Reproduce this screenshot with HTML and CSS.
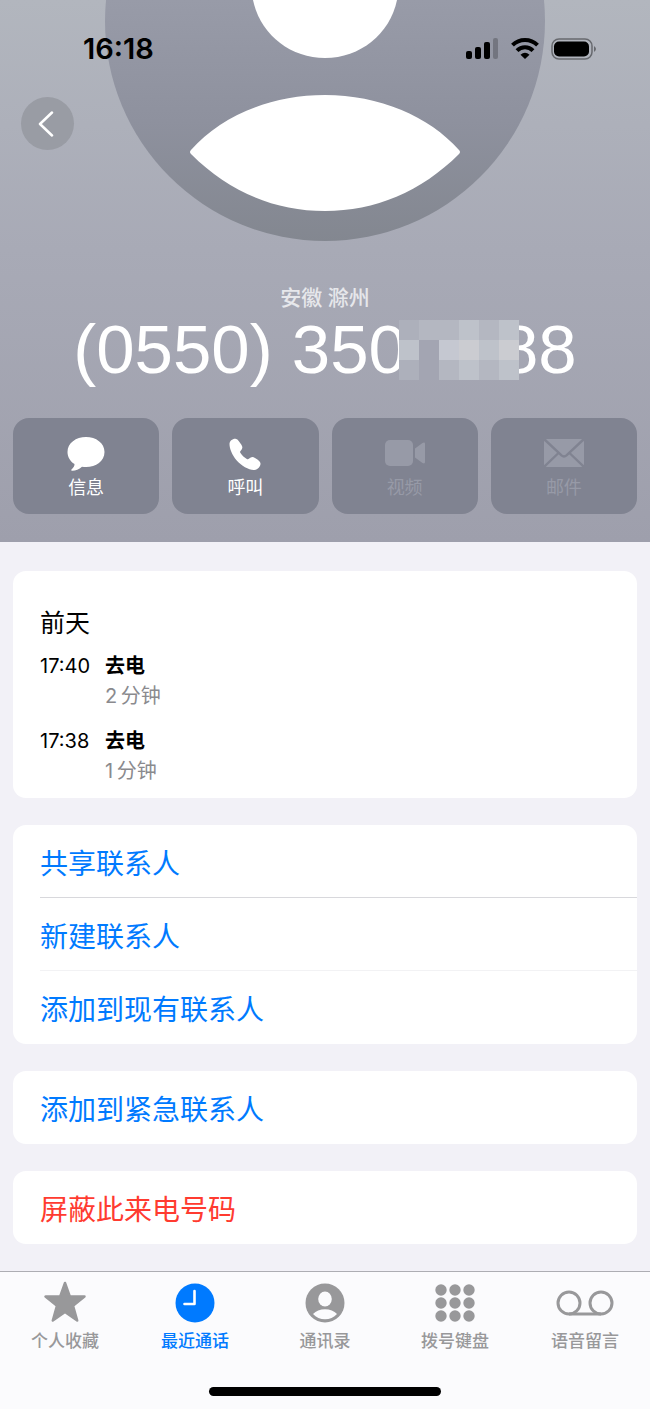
FILE: index.html
```html
<!DOCTYPE html>
<html lang="zh-CN">
<head>
  <meta charset="UTF-8">
  <meta name="viewport" content="width=device-width, initial-scale=1.0">
  <title>通话详情</title>
  <link rel="stylesheet" href="styles.css">
</head>
<body>
  <header class="hero">
    <svg class="avatar" viewBox="0 0 440 242" width="440" height="242" aria-hidden="true">
      <defs>
        <linearGradient id="avatar-fill" x1="0" y1="0" x2="0" y2="242" gradientUnits="userSpaceOnUse">
          <stop offset="0" stop-color="#989ba8"/>
          <stop offset="0.5" stop-color="#8e919e"/>
          <stop offset="1" stop-color="#838790"/>
        </linearGradient>
      </defs>
      <circle cx="220" cy="21" r="220" fill="url(#avatar-fill)"/>
      <path d="M148 0C155 34 185 58 220 58S285 34 292 0Z" fill="#fff"/>
      <path d="M86 150C116 116 166 95 220 95S324 116 354 150Q356 152 354 154C316 192 270 211 220 211S124 192 86 154Q84 152 86 150Z" fill="#fff"/>
    </svg>

    <div class="status-bar">
      <span class="clock">16:18</span>
      <div class="status-icons">
        <svg width="33" height="22" viewBox="0 0 33 22" aria-hidden="true">
          <rect x="0" y="13" width="6" height="8" rx="2"/>
          <rect x="9" y="9" width="6" height="12" rx="2"/>
          <rect x="18" y="4" width="6" height="17" rx="2"/>
          <rect x="27" y="0" width="5" height="21" rx="2" opacity="0.22"/>
        </svg>
        <svg width="28" height="22" viewBox="0 0 28 22" aria-hidden="true">
          <path d="M1.500 7.200A17.800 17.800 0 0 1 26.500 7.200" fill="none" stroke="#000" stroke-width="4"/>
          <path d="M6 12.600A11.200 11.200 0 0 1 22 12.600" fill="none" stroke="#000" stroke-width="4"/>
          <path d="M14 21L9.500 16.700Q14 12.600 18.500 16.700Z"/>
        </svg>
        <svg width="46" height="22" viewBox="0 0 46 22" aria-hidden="true">
          <rect x="1" y="1" width="40" height="20" rx="7" fill="none" stroke="#000" stroke-opacity="0.42" stroke-width="1.500"/>
          <rect x="3" y="3.500" width="35" height="15" rx="5"/>
          <path d="M43 8Q47 11 43 14Z" opacity="0.42"/>
        </svg>
      </div>
    </div>

    <button type="button" class="back" aria-label="返回">
      <svg width="16" height="26" viewBox="0 0 16 26" fill="none" stroke="#fff" stroke-width="2.500" stroke-linecap="round" stroke-linejoin="round">
        <path d="M14 1.500L2 13L14 24.500"/>
      </svg>
    </button>

    <p class="location">安徽 滁州</p>
    <h1 class="number">
      <span>(0550) 350</span>
      <span class="mosaic" aria-hidden="true">
        <i class="m1"></i><i class="m2"></i><i class="m2"></i><i class="m3"></i><i class="m2"></i><i class="m3"></i>
        <i class="m3"></i><i class="m0"></i><i class="m4"></i><i class="m5"></i><i class="m3"></i><i class="m5"></i>
        <i class="m1"></i><i class="m0"></i><i class="m2"></i><i class="m3"></i><i class="m2"></i><i class="m3"></i>
      </span>
      <span>88</span>
    </h1>

    <div class="actions">
      <button type="button" class="action">
        <svg width="40" height="36" viewBox="0 0 40 36" fill="currentColor" aria-hidden="true">
          <path d="M20 2C30 2 38.500 8 38.500 17S30 32 20 32Q18 32 16 31.700C13 34.500 9 36 6 35.800C5 35.700 5 35 5.700 34.300C7.500 32.500 8.600 31 8.500 29C4 26.300 1.500 22 1.500 17C1.500 8 10 2 20 2Z"/>
        </svg>
        信息
      </button>
      <button type="button" class="action">
        <svg width="40" height="36" viewBox="0 0 40 36" fill="currentColor" aria-hidden="true">
          <path d="M4.500 9C4.500 6 7.500 3.600 10.500 3.800C12.400 4 13.400 5.500 16.400 9.800C17.900 12 17.600 13.800 15.900 15.500C14.900 16.500 14.900 17 15.500 18C17 20.400 19.500 22.700 21.800 24C22.800 24.500 23.300 24.400 24.200 23.600C26 21.900 27.800 21.600 30 23C33.800 25.400 35.400 26.700 35.500 28.400C35.700 31.200 33 34.600 29.500 34.900C24.500 35.400 16.500 31 11.500 25.200C7 20 4.500 13.500 4.500 9Z"/>
        </svg>
        呼叫
      </button>
      <button type="button" class="action" disabled>
        <svg width="40" height="36" viewBox="0 0 40 36" fill="currentColor" aria-hidden="true">
          <rect x="0" y="5" width="28" height="26" rx="5"/>
          <path d="M30 13.500L37.500 8Q40 6.800 40 9V27Q40 29.200 37.500 28L30 22.500Z"/>
        </svg>
        视频
      </button>
      <button type="button" class="action" disabled>
        <svg width="40" height="36" viewBox="0 0 40 36" aria-hidden="true">
          <rect x="0" y="4" width="40" height="28" rx="3" fill="currentColor"/>
          <path d="M0 4L17.500 20.300Q20 22.500 22.500 20.300L40 4M0 32L14 18.500M40 32L26 18.500" fill="none" stroke="#808391" stroke-width="2.400"/>
        </svg>
        邮件
      </button>
    </div>
  </header>

  <main class="content">
    <section class="card history">
      <h2>前天</h2>
      <dl class="call">
        <dt>17:40</dt>
        <dd class="kind">去电</dd>
        <dd class="duration">2&thinsp;分钟</dd>
      </dl>
      <dl class="call">
        <dt>17:38</dt>
        <dd class="kind">去电</dd>
        <dd class="duration">1&thinsp;分钟</dd>
      </dl>
    </section>

    <section class="card">
      <button type="button" class="row">共享联系人</button>
      <button type="button" class="row faint">新建联系人</button>
      <button type="button" class="row">添加到现有联系人</button>
    </section>

    <section class="card">
      <button type="button" class="row">添加到紧急联系人</button>
    </section>

    <section class="card">
      <button type="button" class="row danger">屏蔽此来电号码</button>
    </section>
  </main>

  <footer class="bottom">
    <nav class="tabs">
      <a href="#favorites" class="tab">
        <svg width="44" height="44" viewBox="0 0 44 44" fill="currentColor" stroke="currentColor" stroke-width="2.500" stroke-linejoin="round" aria-hidden="true">
          <path d="M22 3L26.800 16.500H41.500L30 25.700L34.200 40.500L22 32L9.800 40.500L14 25.700L2.500 16.500H17.200Z"/>
        </svg>
        个人收藏
      </a>
      <a href="#recents" class="tab active">
        <svg width="44" height="44" viewBox="0 0 44 44" fill="currentColor" aria-hidden="true">
          <circle cx="22" cy="23" r="19.500"/>
          <path d="M21.500 11V24H11.500" fill="none" stroke="#fff" stroke-width="2.600" stroke-linecap="round" stroke-linejoin="round"/>
        </svg>
        最近通话
      </a>
      <a href="#contacts" class="tab">
        <svg width="44" height="44" viewBox="0 0 44 44" fill="currentColor" aria-hidden="true">
          <circle cx="22" cy="23" r="19.500"/>
          <ellipse cx="22" cy="19" rx="6.800" ry="7.500" fill="#fbfbfd"/>
          <path d="M10 34C13 31 17 29.300 22 29.300S31 31 34 34C31 37.500 26.500 39.300 22 39.300S13 37.500 10 34Z" fill="#fbfbfd"/>
        </svg>
        通讯录
      </a>
      <a href="#keypad" class="tab">
        <svg width="44" height="44" viewBox="0 0 44 44" fill="currentColor" aria-hidden="true">
          <circle cx="8" cy="10" r="5.700"/><circle cx="22" cy="10" r="5.700"/><circle cx="36" cy="10" r="5.700"/>
          <circle cx="8" cy="23" r="5.700"/><circle cx="22" cy="23" r="5.700"/><circle cx="36" cy="23" r="5.700"/>
          <circle cx="8" cy="36" r="5.700"/><circle cx="22" cy="36" r="5.700"/><circle cx="36" cy="36" r="5.700"/>
        </svg>
        拨号键盘
      </a>
      <a href="#voicemail" class="tab">
        <svg width="58" height="44" viewBox="0 0 58 44" fill="none" stroke="currentColor" stroke-width="3" aria-hidden="true">
          <circle cx="13" cy="23" r="11"/>
          <circle cx="45" cy="23" r="11"/>
          <path d="M13 34H45"/>
        </svg>
        语音留言
      </a>
    </nav>
    <div class="home-indicator"></div>
  </footer>
</body>
</html>
```
FILE: styles.css
```css
* {
  box-sizing: border-box;
}

body {
  margin: 0;
  min-height: 100vh;
  display: flex;
  flex-direction: column;
  background: #f2f1f7;
  color: #000;
  font-family: "Inter", "Noto Sans CJK SC", sans-serif;
}

h1, h2, p, dl, dd {
  margin: 0;
}

button {
  border: none;
  padding: 0;
  font: inherit;
  cursor: pointer;
}

svg {
  display: block;
}

/* Contact header */
.hero {
  position: relative;
  display: flex;
  flex-direction: column;
  padding-bottom: 28px;
  background: linear-gradient(#b2b6be, #a8aab6 46%, #9e9fac);
  color: #fff;
}

/* poster circle runs under the status bar and the back button */
.avatar {
  position: absolute;
  top: 0;
  left: 50%;
  transform: translateX(-50%);
}

.status-bar {
  position: relative;
  display: flex;
  justify-content: space-between;
  align-items: center;
  height: 97px;
  padding: 0 53px 0 83px;
  color: #000;
}

.clock {
  font-size: 29px;
  font-weight: 600;
}

.status-icons {
  display: flex;
  gap: 12px;
}

.back {
  position: relative;
  display: flex;
  align-items: center;
  justify-content: center;
  width: 53px;
  height: 53px;
  margin-left: 21px;
  padding-right: 3px;
  border-radius: 50%;
  background: #999ca4;
}

.location {
  margin-top: 133px;
  font-size: 21px;
  font-weight: 500;
  line-height: 30px;
  text-align: center;
  color: #e6e7eb;
}

.number {
  display: flex;
  align-items: center;
  justify-content: center;
  height: 74px;
  font-family: "Liberation Sans", Arial, sans-serif;
  font-size: 69px;
  font-weight: 400;
  line-height: 74px;
  white-space: nowrap;
}

/* hides the middle digits */
.mosaic {
  position: relative;
  display: grid;
  grid-template-columns: repeat(6, 20px);
  grid-auto-rows: 20px;
  margin: 0 -19px 0 -8px;
}

.m0 { background: #a3a5b2; }
.m1 { background: #adb0bb; }
.m2 { background: #b4b7c1; }
.m3 { background: #bec2ca; }
.m4 { background: #c5c8d1; }
.m5 { background: #cbccd1; }

.actions {
  display: grid;
  grid-template-columns: repeat(4, 1fr);
  gap: 13px;
  margin-top: 31px;
  padding: 0 13px;
}

.action {
  display: flex;
  flex-direction: column;
  align-items: center;
  gap: 3px;
  height: 96px;
  padding-top: 17px;
  border-radius: 16px;
  background: #808391;
  color: #fff;
  font-size: 18px;
  line-height: 28px;
}

.action:disabled {
  color: #979aa7;
  cursor: default;
}

/* Cards */
.content {
  flex: 1;
  display: flex;
  flex-direction: column;
  gap: 27px;
  padding: 29px 13px 27px;
}

.card {
  border-radius: 13px;
  background: #fff;
  overflow: hidden;
}

.history {
  padding: 34px 27px 12px;
}

.history h2 {
  margin-bottom: 10px;
  font-size: 25px;
  font-weight: 400;
  line-height: 36px;
}

.call {
  display: grid;
  grid-template-columns: 65px 1fr;
  font-size: 20px;
  line-height: 30px;
}

.call + .call {
  margin-top: 15px;
}

.kind {
  font-weight: 700;
}

.duration {
  grid-column: 2;
  color: #8a8a8e;
}

.row {
  display: flex;
  align-items: center;
  width: 100%;
  height: 73px;
  padding-left: 27px;
  background: linear-gradient(#d8d8dc, #d8d8dc) 27px 100% / 100% 1px no-repeat;
  color: #007aff;
  font-size: 28px;
}

.row.faint {
  background-image: linear-gradient(#f2f2f4, #f2f2f4);
}

.row:last-child {
  background: none;
}

.row.danger {
  color: #ff3b30;
}

/* Tab bar */
.bottom {
  border-top: 1px solid #adadb3;
  background: #fbfbfd;
}

.tabs {
  display: grid;
  grid-template-columns: repeat(5, 1fr);
}

.tab {
  display: flex;
  flex-direction: column;
  align-items: center;
  padding-top: 8px;
  color: #98989a;
  font-size: 17px;
  font-weight: 500;
  line-height: 34px;
  text-decoration: none;
}

.tab.active {
  color: #007aff;
}

.home-indicator {
  width: 232px;
  height: 9px;
  margin: 29px auto 13px;
  border-radius: 5px;
  background: #000;
}
```
